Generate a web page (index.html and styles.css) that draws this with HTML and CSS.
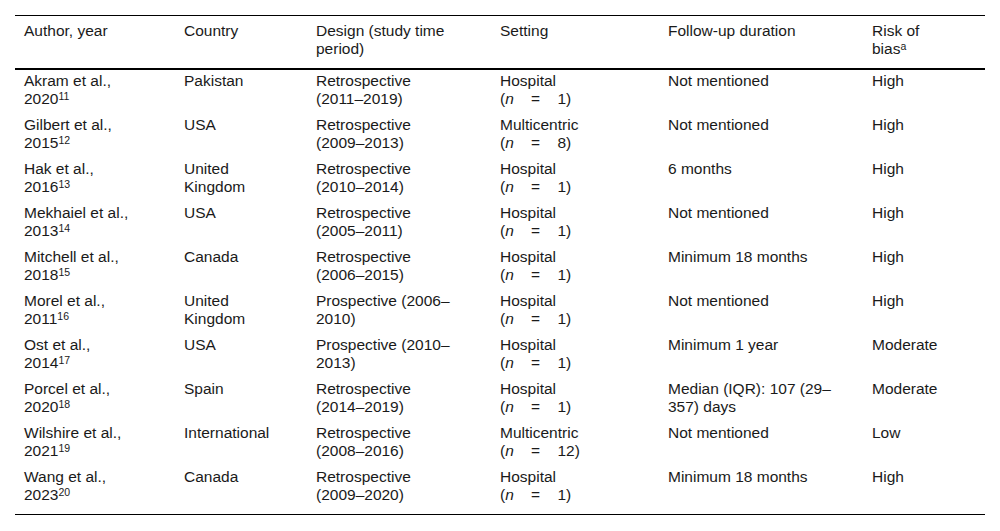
FILE: index.html
```html
<!DOCTYPE html>
<html lang="en">
<head>
<meta charset="utf-8">
<title>Studies</title>
<link rel="stylesheet" href="styles.css">
</head>
<body>
<div class="wrap">
<table class="studies">
  <colgroup>
    <col class="c1"><col class="c2"><col class="c3"><col class="c4"><col class="c5"><col class="c6">
  </colgroup>
  <thead>
    <tr>
      <th>Author, year</th>
      <th>Country</th>
      <th>Design (study time period)</th>
      <th>Setting</th>
      <th>Follow-up duration</th>
      <th>Risk of bias<sup>a</sup></th>
    </tr>
  </thead>
  <tbody>
    <tr>
      <td>Akram et al., 2020<sup>11</sup></td>
      <td>Pakistan</td>
      <td>Retrospective (2011–2019)</td>
      <td>Hospital <span class="n">(<i>n</i> = 1)</span></td>
      <td>Not mentioned</td>
      <td>High</td>
    </tr>
    <tr>
      <td>Gilbert et al., 2015<sup>12</sup></td>
      <td>USA</td>
      <td>Retrospective (2009–2013)</td>
      <td>Multicentric <span class="n">(<i>n</i> = 8)</span></td>
      <td>Not mentioned</td>
      <td>High</td>
    </tr>
    <tr>
      <td>Hak et al., 2016<sup>13</sup></td>
      <td>United Kingdom</td>
      <td>Retrospective (2010–2014)</td>
      <td>Hospital <span class="n">(<i>n</i> = 1)</span></td>
      <td>6 months</td>
      <td>High</td>
    </tr>
    <tr>
      <td>Mekhaiel et al., 2013<sup>14</sup></td>
      <td>USA</td>
      <td>Retrospective (2005–2011)</td>
      <td>Hospital <span class="n">(<i>n</i> = 1)</span></td>
      <td>Not mentioned</td>
      <td>High</td>
    </tr>
    <tr>
      <td>Mitchell et al., 2018<sup>15</sup></td>
      <td>Canada</td>
      <td>Retrospective (2006–2015)</td>
      <td>Hospital <span class="n">(<i>n</i> = 1)</span></td>
      <td>Minimum 18 months</td>
      <td>High</td>
    </tr>
    <tr>
      <td>Morel et al., 2011<sup>16</sup></td>
      <td>United Kingdom</td>
      <td>Prospective (2006–2010)</td>
      <td>Hospital <span class="n">(<i>n</i> = 1)</span></td>
      <td>Not mentioned</td>
      <td>High</td>
    </tr>
    <tr>
      <td>Ost et al., 2014<sup>17</sup></td>
      <td>USA</td>
      <td>Prospective (2010–2013)</td>
      <td>Hospital <span class="n">(<i>n</i> = 1)</span></td>
      <td>Minimum 1 year</td>
      <td>Moderate</td>
    </tr>
    <tr>
      <td>Porcel et al., 2020<sup>18</sup></td>
      <td>Spain</td>
      <td>Retrospective (2014–2019)</td>
      <td>Hospital <span class="n">(<i>n</i> = 1)</span></td>
      <td>Median (IQR): 107 (29–357) days</td>
      <td>Moderate</td>
    </tr>
    <tr>
      <td>Wilshire et al., 2021<sup>19</sup></td>
      <td>International</td>
      <td>Retrospective (2008–2016)</td>
      <td>Multicentric <span class="n">(<i>n</i> = 12)</span></td>
      <td>Not mentioned</td>
      <td>Low</td>
    </tr>
    <tr>
      <td>Wang et al., 2023<sup>20</sup></td>
      <td>Canada</td>
      <td>Retrospective (2009–2020)</td>
      <td>Hospital <span class="n">(<i>n</i> = 1)</span></td>
      <td>Minimum 18 months</td>
      <td>High</td>
    </tr>
  </tbody>
</table>
</div>
</body>
</html>
```
FILE: styles.css
```css
html, body {
  margin: 0;
  padding: 0;
  background: #ffffff;
}

.wrap {
  padding: 15px 15px 0 15px;
}

.studies {
  width: 970px;
  table-layout: fixed;
  border-collapse: collapse;
  font-family: "Liberation Sans", Arial, sans-serif;
  font-size: 15.5px;
  line-height: 18px;
  color: #1a1a1a;
  border-top: 1px solid #000;
  border-bottom: 1px solid #000;
}

.c1 { width: 160px; }
.c2 { width: 132px; }
.c3 { width: 184px; }
.c4 { width: 168px; }
.c5 { width: 204px; }
.c6 { width: 122px; }

.studies th {
  font-weight: normal;
  text-align: left;
  vertical-align: top;
  padding: 6px 30px 10px 9px;
}

.studies thead tr {
  border-bottom: 2px solid #000;
}

.studies td {
  vertical-align: top;
  padding: 2px 30px 6px 9px;
}

.studies th:first-child,
.studies td:first-child {
  padding-right: 44px;
}

.studies tbody tr:last-child td {
  padding-bottom: 10px;
}

.studies sup {
  font-size: 10.5px;
  line-height: 0;
  vertical-align: 4px;
}

.n {
  white-space: nowrap;
  word-spacing: 13px;
}

.n i {
  font-style: italic;
}
```
